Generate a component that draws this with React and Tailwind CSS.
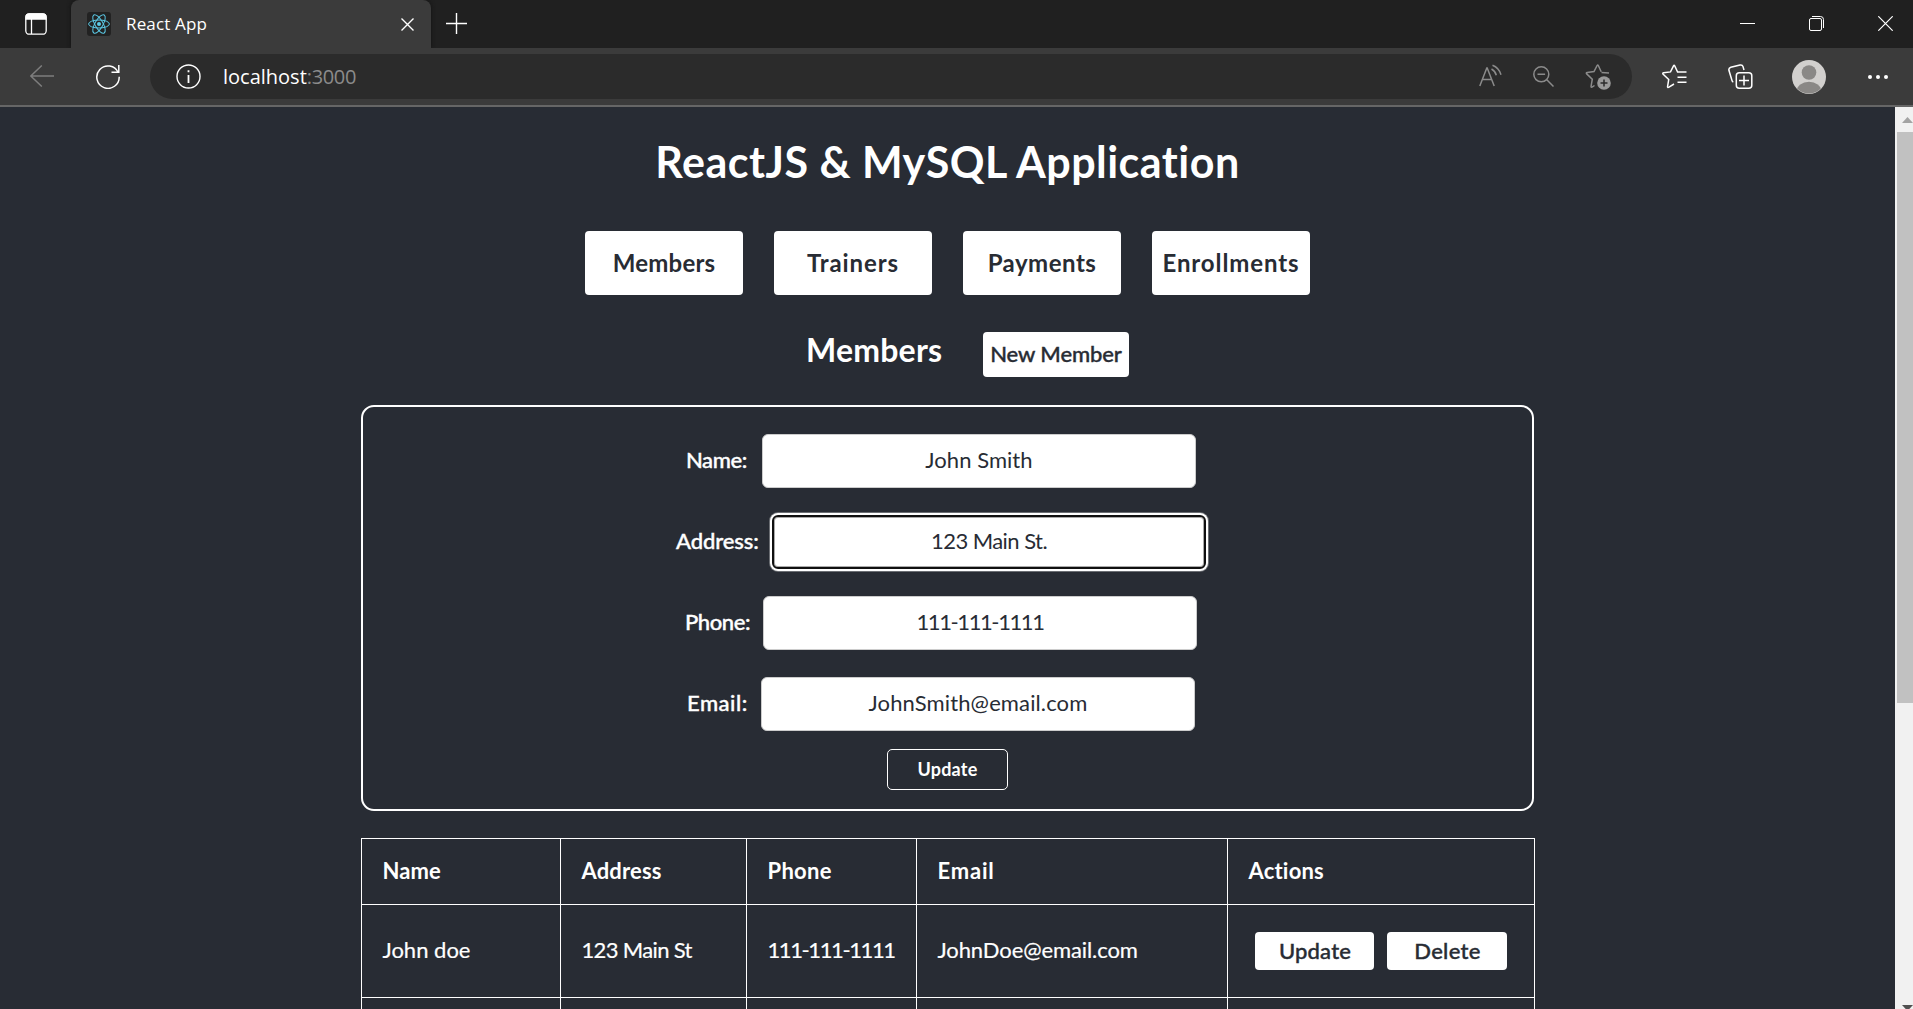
const navItems = [
  ["Members", "tracking-[0.2px]"],
  ["Trainers", "tracking-[0.9px]"],
  ["Payments", "tracking-[0.5px]"],
  ["Enrollments", "tracking-[0.9px]"],
];

const fields = [
  { label: "Name:", value: "John Smith", labelClass: "w-[76px] tracking-[-0.4px]", valueClass: "tracking-[0.05px]" },
  { label: "Address:", value: "123 Main St.", labelClass: "w-[96px] tracking-[-0.1px]", valueClass: "tracking-[-0.55px]", focused: true },
  { label: "Phone:", value: "111-111-1111", labelClass: "w-[78px] tracking-[-0.4px]", valueClass: "tracking-[-1.4px]" },
  { label: "Email:", value: "JohnSmith@email.com", labelClass: "w-[74px] tracking-[0.5px]", valueClass: "tracking-[0.12px]" },
];

const headers = [
  ["Name", "w-[199px] tracking-[0.05px]"],
  ["Address", "w-[186px] tracking-[0.15px]"],
  ["Phone", "w-[170px] tracking-[0.3px]"],
  ["Email", "w-[311px] tracking-[0.8px]"],
  ["Actions", "w-[307px] tracking-[0.2px]"],
];

function TabBar() {
  return (
    <div className="flex h-12 items-center bg-[#202020] text-white">
      <svg className="ml-[25px] h-[22px] w-[22px]" viewBox="0 0 22 22" fill="none" stroke="#fff" strokeWidth="1.3">
        <rect x="0.8" y="0.8" width="20.4" height="20.4" rx="3.5" />
        <path d="M1 4.2Q1 1 4.2 1h13.6Q21 1 21 4.2V6H1Z" fill="#fff" />
        <path d="M6.5 6v15" />
      </svg>
      <div className="ml-6 flex h-12 w-[360px] items-center rounded-t-[8px] bg-[#3b3b3b] shadow-[0_0_4px_#111]">
        <div className="ml-4 flex h-6 w-6 items-center justify-center rounded-[3px] bg-[#222]">
          <svg className="h-[22px] w-[22px]" viewBox="-11 -11 22 22" fill="none" stroke="#5ccbe8" strokeWidth="1">
            <circle r="2" fill="#5ccbe8" stroke="none" />
            <ellipse rx="10.4" ry="4" />
            <ellipse rx="10.4" ry="4" transform="rotate(60)" />
            <ellipse rx="10.4" ry="4" transform="rotate(120)" />
          </svg>
        </div>
        <span className="ml-[15px] font-['Open_Sans',sans-serif] text-[17px] leading-6 tracking-[0.15px]">React App</span>
        <svg className="mr-[17px] mt-px ml-auto h-[13px] w-[13px]" viewBox="0 0 13 13" stroke="#fff" strokeWidth="1.4">
          <path d="M.5.5l12 12M12.5.5l-12 12" />
        </svg>
      </div>
      <svg className="mb-px ml-[15px] h-[21px] w-[21px]" viewBox="0 0 21 21" stroke="#fff" strokeWidth="1.4">
        <path d="M10.5 0v21M0 10.5h21" />
      </svg>
      <div className="mr-5 mb-px ml-auto flex items-center gap-[54px]">
        <svg className="h-[15px] w-[15px]" viewBox="0 0 15 15" stroke="#fff"><path d="M0 7.5h15" /></svg>
        <svg className="h-[15px] w-[15px]" viewBox="0 0 15 15" fill="none" stroke="#fff">
          <rect x="0.5" y="2.5" width="12" height="12" rx="1.5" />
          <path d="M3 .5h8.5q3 0 3 3V12" />
        </svg>
        <svg className="h-[15px] w-[15px]" viewBox="0 0 15 15" stroke="#fff" strokeWidth="1.2"><path d="M.3.3l14.4 14.4M14.7.3L.3 14.7" /></svg>
      </div>
    </div>
  );
}

const star = "M16.5 8.5L24 9M9.5 21.5L7.4 22.9q-1.6 1-1.3-.8L7.3 15.2 1.7 9.9q-1-1.1.5-1.4L9 7.6 12.1 1.5q.6-1.1 1.2 0L16.2 7.7";

function AddressBar() {
  return (
    <div className="flex h-[59px] items-center border-b-2 border-[#666] bg-[#3b3b3b]">
      <svg className="mb-px ml-[30px] h-[22px] w-6" viewBox="0 0 24 22" fill="none" stroke="#7d7d7d" strokeWidth="1.5">
        <path d="M24 11H.8M11.8 .5L.8 11l11 10.5" />
      </svg>
      <svg className="ml-[42px] h-[25px] w-6" viewBox="0 0 24 25" fill="none" stroke="#fff" strokeWidth="1.5">
        <path d="M22.2 8.5A11.2 11.2 0 1 0 23.2 12.8M22.8 1v7.2h-7.3" />
      </svg>
      <div className="ml-[30px] flex h-[45px] w-[1482px] items-center rounded-full bg-[#2b2b2b]">
        <svg className="ml-[26px] h-[25px] w-[25px]" viewBox="0 0 25 25" fill="none" stroke="#fff" strokeWidth="1.4">
          <circle cx="12.5" cy="12.5" r="11.5" />
          <path d="M12.5 11v8M12.5 6.3v2" strokeWidth="1.8" />
        </svg>
        <span className="ml-[22px] font-['Open_Sans',sans-serif] text-[20px] leading-6 text-white">
          localhost<span className="tracking-[-0.35px] text-[#8b8b8b]">:3000</span>
        </span>
        <svg className="mr-[31px] mb-[3px] ml-auto h-[23px] w-[23px]" viewBox="0 0 23 23" fill="none" stroke="#8b8b8b" strokeWidth="1.5">
          <path d="M.8 22L7.8 4h.4l7 18M3.3 15.5h9.5M13.5 1.2q6.5 2.5 8.5 9.5M12.5 5q3.7 2 4.8 6.2" />
        </svg>
        <svg className="mr-[31px] h-[21px] w-[21px]" viewBox="0 0 21 21" fill="none" stroke="#8b8b8b" strokeWidth="1.5">
          <circle cx="8.3" cy="8.3" r="7.5" />
          <path d="M4.5 8.3h7.6M13.8 13.8l6.7 6.7" />
        </svg>
        <svg className="mt-px mr-[21px] h-[26px] w-[26px]" viewBox="0 0 26 26" fill="none" stroke="#8b8b8b" strokeWidth="1.5">
          <path d={star} />
          <circle cx="19" cy="19" r="6.8" fill="#9a9a9a" stroke="none" />
          <path d="M19 15.5v7M15.5 19h7" stroke="#2b2b2b" />
        </svg>
      </div>
      <svg className="ml-[30px] h-[25px] w-[25px]" viewBox="0 0 25 25" fill="none" stroke="#fff" strokeWidth="1.5">
        <path d="M12 20L7 23.2q-1.7.9-1.4-.9L6.7 15.5 1.2 10.3q-1-1.2.5-1.5L8.500 7.9 11.5 1.800q.6-1.1 1.2 0L15.600 8.100H24.500M15.500 13.200h9M15.500 18.200h9" />
      </svg>
      <svg className="ml-[41px] h-[25px] w-[25px]" viewBox="0 0 25 25" fill="none" stroke="#fff" strokeWidth="1.5">
        <rect x="8.3" y="8.7" width="15.5" height="15.5" rx="3" />
        <path d="M16 11.5v10M11 16.5h10M5.3 18q-1-.3-1.3-1.5L.9 6.3Q.5 4 2.8 3.3L12 1q2.3-.5 3 1.6l1 3.4" />
      </svg>
      <svg className="ml-[39px] h-[34px] w-[34px]" viewBox="0 0 34 34">
        <defs><clipPath id="avatar"><circle cx="17" cy="17" r="16.5" /></clipPath></defs>
        <circle cx="17" cy="17" r="17" fill="#d2d0ce" />
        <circle cx="17" cy="12.5" r="7.3" fill="#8a8886" />
        <ellipse cx="17" cy="31" rx="12.3" ry="9.3" fill="#8a8886" clipPath="url(#avatar)" />
      </svg>
      <svg className="ml-[42px] h-5 w-5" viewBox="0 0 20 20" fill="#fff">
        <circle cx="2" cy="10" r="2" /><circle cx="10" cy="10" r="2" /><circle cx="18" cy="10" r="2" />
      </svg>
    </div>
  );
}

function Field({ label, value, labelClass, valueClass, focused }) {
  return (
    <div className="flex h-[54px] items-center justify-center pr-[13px]">
      <label className={`shrink-0 pb-1 text-[22px] font-medium [-webkit-text-stroke:0.4px] ${labelClass}`}>{label}</label>
      <input
        readOnly
        value={value}
        className={`h-[54px] w-[434px] shrink-0 rounded-[6px] bg-white pb-1 text-center text-[22px] text-[#282c34] outline-none ${valueClass} ${
          focused
            ? "border-2 border-[#101010] shadow-[0_0_0_2px_#fff,0_0_0_3px_#6b6e73,inset_0_0_0_1px_#aaa]"
            : "border border-[#ccc]"
        }`}
      />
    </div>
  );
}

function MemberForm() {
  return (
    <div className="mt-[28px] flex h-[406px] w-[1173px] shrink-0 flex-col rounded-[13px] border-2 border-white pt-[27px]">
      <div className="flex flex-col gap-[27px]">
        {fields.map((f) => <Field key={f.label} {...f} />)}
      </div>
      <button className="mt-[18px] h-[41px] w-[121px] shrink-0 self-center rounded-[5px] border border-white text-[18px] font-bold tracking-[0.2px]">
        Update
      </button>
    </div>
  );
}

function MemberTable() {
  return (
    <table className="mt-[27px] w-[1173px] table-fixed border-collapse text-left text-[22px] leading-6">
      <thead>
        <tr className="h-[66px]">
          {headers.map(([t, c]) => (
            <th key={t} className={`border border-white pr-2 pb-px pl-[21px] font-bold ${c}`}>{t}</th>
          ))}
        </tr>
      </thead>
      <tbody>
        <tr className="h-[93px] [-webkit-text-stroke:0.2px]">
          <td className="border border-white pb-0.5 pl-[21px]">John doe</td>
          <td className="border border-white pb-0.5 pl-[21px] tracking-[-0.65px]">123 Main St</td>
          <td className="border border-white pb-0.5 pl-[21px] tracking-[-1.4px]">111-111-1111</td>
          <td className="border border-white pb-0.5 pl-[21px] tracking-[-0.1px]">JohnDoe@email.com</td>
          <td className="border border-white pl-[27px]">
            <div className="flex gap-[13px] text-[#282c34] [-webkit-text-stroke:0.4px]">
              <button className="h-[38px] w-[119px] rounded-[4px] bg-white pl-0.5 font-medium tracking-[0.2px]">Update</button>
              <button className="h-[38px] w-[120px] rounded-[4px] bg-white pl-0.5 font-medium tracking-[0.3px]">Delete</button>
            </div>
          </td>
        </tr>
        <tr className="h-[93px]">
          {headers.map(([t]) => <td key={t} className="border border-white" />)}
        </tr>
      </tbody>
    </table>
  );
}

function Scrollbar() {
  return (
    <div className="flex w-[18px] flex-col items-end bg-[#f1f1f1]">
      <svg className="mt-[10px] h-[6px] w-[11px]" viewBox="0 0 11 6" fill="#a3a3a3"><path d="M0 6L5.5 0 11 6Z" /></svg>
      <div className="mt-[9px] h-[571px] w-4 bg-[#c1c1c1]" />
      <svg className="mt-auto h-1 w-[11px]" viewBox="0 0 11 4" fill="#505050"><path d="M0 0h11L7.3 4H3.7Z" /></svg>
    </div>
  );
}

export default function App() {
  return (
    <div className="flex h-[1009px] w-[1913px] flex-col overflow-hidden">
      <TabBar />
      <AddressBar />
      <div className="flex min-h-0 flex-1">
        <main className="flex flex-1 flex-col items-center overflow-hidden bg-[#282c34] font-['Lato',sans-serif] text-white">
          <h1 className="mt-[30px] shrink-0 text-[43px] leading-[50px] font-bold tracking-[0.48px]">ReactJS &amp; MySQL Application</h1>
          <nav className="mt-11 flex shrink-0 gap-[31px]">
            {navItems.map(([t, c]) => (
              <button key={t} className={`h-16 w-[158px] rounded-[4px] bg-white text-[24px] font-bold text-[#282c34] ${c}`}>{t}</button>
            ))}
          </nav>
          <div className="mt-[37px] ml-10 flex h-[45px] w-[323px] shrink-0 items-start justify-between">
            <h2 className="text-[32px] leading-[35px] font-bold tracking-[0.2px]">Members</h2>
            <button className="h-[45px] w-[146px] rounded-[4px] bg-white pb-0.5 text-[22px] font-medium tracking-[-0.1px] text-[#282c34] [-webkit-text-stroke:0.4px]">New Member</button>
          </div>
          <MemberForm />
          <MemberTable />
        </main>
        <Scrollbar />
      </div>
    </div>
  );
}
